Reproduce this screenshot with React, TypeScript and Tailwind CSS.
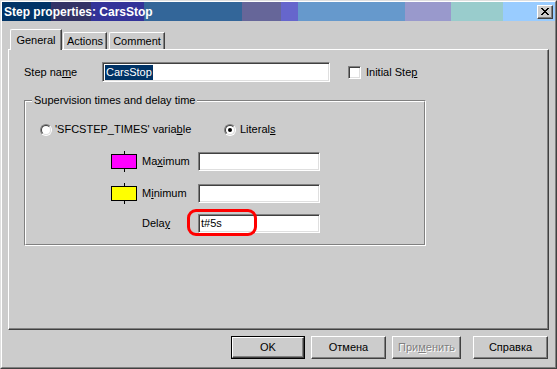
import React from 'react';

// подчёркнутая буква-акселератор, как в классических диалогах
const U: React.FC<{ children: React.ReactNode }> = ({ children }) => (
    <span className="underline underline-offset-[1px]">{children}</span>
);

const sunken = "bg-white border border-t-[#808080] border-l-[#808080] border-r-white border-b-white shadow-[inset_1px_1px_0_#404040,inset_-1px_-1px_0_#dfdfdf]";
const raised = "bg-[#cccccc] border border-t-white border-l-white border-r-[#404040] border-b-[#404040] shadow-[inset_-1px_-1px_0_#808080]";

const Radio: React.FC<{ checked?: boolean }> = ({ checked }) => (
    <div className="w-[12px] h-[12px] rounded-full border border-t-[#808080] border-l-[#808080] border-r-white border-b-white flex items-center justify-center">
        <div className="w-[10px] h-[10px] rounded-full bg-white border border-t-[#404040] border-l-[#404040] border-r-[#dfdfdf] border-b-[#dfdfdf] flex items-center justify-center">
            {checked && <div className="w-[4px] h-[4px] rounded-full bg-black" />}
        </div>
    </div>
);

const Swatch: React.FC<{ color: string }> = ({ color }) => (
    <div className="w-[26px] flex flex-col items-center -my-[1px]">
        <div className="w-px h-[3px] bg-black" />
        <div className={`w-[26px] h-[15px] border border-black ${color}`} />
        <div className="w-px h-[3px] bg-black" />
    </div>
);

const Button: React.FC<{ label: React.ReactNode; className: string; isDefault?: boolean; disabled?: boolean }> = ({ label, className, isDefault, disabled }) => (
    <div className={`h-[23px] ${className} ${isDefault ? 'border border-black' : ''}`}>
        <div className={`w-full h-full flex items-center justify-center ${raised} ${disabled ? 'text-[#808080] [text-shadow:1px_1px_0_#ffffff]' : 'text-black'}`}>
            {label}
        </div>
    </div>
);

export default function App() {
    return (
        <div className="w-[557px] h-[369px] border border-t-[#dfdfdf] border-l-[#dfdfdf] border-r-[#404040] border-b-[#404040] font-['Liberation_Sans',Arial,sans-serif] text-[11px] leading-[13px] text-black">
            <div className="w-full h-full flex flex-col bg-[#cccccc] border border-t-white border-l-white border-r-[#808080] border-b-[#808080]">
                {/* ЗАГОЛОВОК */}
                <div className="h-[19px] shrink-0 flex items-center justify-between pl-[2px] pr-[2px] bg-[linear-gradient(to_right,#003366_49px,#333366_49px,#333366_89px,#333399_89px,#333399_142px,#336699_142px,#336699_240px,#666699_240px,#666699_279px,#6666cc_279px,#6666cc_296px,#6699cc_296px,#6699cc_403px,#9999cc_403px,#9999cc_449px,#99cccc_449px,#99cccc_501px,#99ccff_501px)]">
                    <span className="text-white font-bold text-[12px] leading-[14px]">Step properties: CarsStop</span>
                    <div className={`w-[16px] h-[14px] flex items-center justify-center ${raised}`}>
                        <svg width="8" height="7" viewBox="0 0 8 7" shapeRendering="crispEdges">
                            <path d="M0 0h2v1h-2zM6 0h2v1h-2zM1 1h2v1h-2zM5 1h2v1h-2zM2 2h4v1h-4zM3 3h2v1h-2zM2 4h4v1h-4zM1 5h2v1h-2zM5 5h2v1h-2zM0 6h2v1h-2zM6 6h2v1h-2z" fill="#000" />
                        </svg>
                    </div>
                </div>

                {/* ВКЛАДКИ */}
                <div className="mt-[8px] ml-[8px] h-[20px] flex items-end gap-[1px]">
                    <div className="relative z-10 w-[52px] h-[21px] -mb-px flex items-center justify-center bg-[#cccccc] border-l border-t border-r border-l-white border-t-white border-r-[#404040] rounded-tl-[2px] shadow-[inset_-1px_0_0_#808080]">
                        General
                    </div>
                    <div className="w-[44px] h-[17px] flex items-center justify-center border-l border-t border-r border-l-white border-t-white border-r-[#404040] rounded-tl-[2px] shadow-[inset_-1px_0_0_#808080]">
                        Actions
                    </div>
                    <div className="ml-[1px] w-[56px] h-[17px] flex items-center justify-center border-l border-t border-r border-l-white border-t-white border-r-[#404040] rounded-tl-[2px] shadow-[inset_-1px_0_0_#808080]">
                        Comment
                    </div>
                </div>

                {/* ПАНЕЛЬ */}
                <div className="ml-[6px] w-[541px] h-[281px] flex flex-col border border-t-white border-l-white border-r-[#404040] border-b-[#404040] shadow-[inset_-1px_-1px_0_#808080]">
                    <div className="mt-[12px] pl-[15px] flex items-center h-[20px]">
                        <div className="w-[78px]">Step na<U>m</U>e</div>
                        <div className={`w-[228px] h-[20px] flex items-center pl-[2px] ${sunken}`}>
                            <span className="bg-[#003366] text-white px-[1px] leading-[15px]">CarsStop</span>
                        </div>
                        <div className={`ml-[18px] w-[13px] h-[13px] ${sunken}`} />
                        <div className="ml-[5px]">Initial Ste<U>p</U></div>
                    </div>

                    {/* ГРУППА */}
                    <div className="mt-[18px] ml-[15px] w-[402px] h-[146px] border border-t-[#808080] border-l-[#808080] border-r-white border-b-white">
                        <div className="w-full h-full flex flex-col border border-t-white border-l-white border-r-[#808080] border-b-[#808080]">
                            <div className="-mt-[8px] ml-[6px] w-fit px-[2px] bg-[#cccccc]">Supervision times and delay time</div>

                            <div className="mt-[16px] pl-[14px] flex items-center h-[13px]">
                                <div className="w-[184px] flex items-center gap-[3px]">
                                    <Radio />
                                    <span>'SFCSTEP_TIMES' varia<U>b</U>le</span>
                                </div>
                                <div className="flex items-center gap-[4px]">
                                    <Radio checked />
                                    <span>Literal<U>s</U></span>
                                </div>
                            </div>

                            <div className="mt-[16px] pl-[85px] flex items-center h-[19px]">
                                <Swatch color="bg-[#ff00ff]" />
                                <div className="ml-[5px] w-[56px]">Ma<U>x</U>imum</div>
                                <div className={`w-[122px] h-[19px] ${sunken}`} />
                            </div>

                            <div className="mt-[13px] pl-[85px] flex items-center h-[19px]">
                                <Swatch color="bg-[#ffff00]" />
                                <div className="ml-[5px] w-[56px]">M<U>i</U>nimum</div>
                                <div className={`w-[122px] h-[19px] ${sunken}`} />
                            </div>

                            <div className="mt-[11px] pl-[85px] flex items-center h-[19px]">
                                <div className="w-[26px]" />
                                <div className="ml-[5px] w-[56px]">Dela<U>y</U></div>
                                <div className="relative">
                                    <div className={`w-[122px] h-[19px] flex items-center pl-[2px] ${sunken}`}>t#5s</div>
                                    {/* красная пометка поверх поля */}
                                    <div className="absolute left-[-11px] top-[-5px] w-[70px] h-[27px] border-[3px] border-[#ff0000] rounded-[9px]" />
                                </div>
                            </div>
                        </div>
                    </div>
                </div>

                {/* КНОПКИ */}
                <div className="mt-[6px] pr-[7px] flex justify-end">
                    <Button label="OK" className="w-[74px]" isDefault />
                    <Button label="Отмена" className="ml-[6px] w-[75px]" />
                    <Button label={<>При<U>м</U>енить</>} className="ml-[6px] w-[69px]" disabled />
                    <Button label="Справка" className="ml-[12px] w-[75px]" />
                </div>
            </div>
        </div>
    );
}
